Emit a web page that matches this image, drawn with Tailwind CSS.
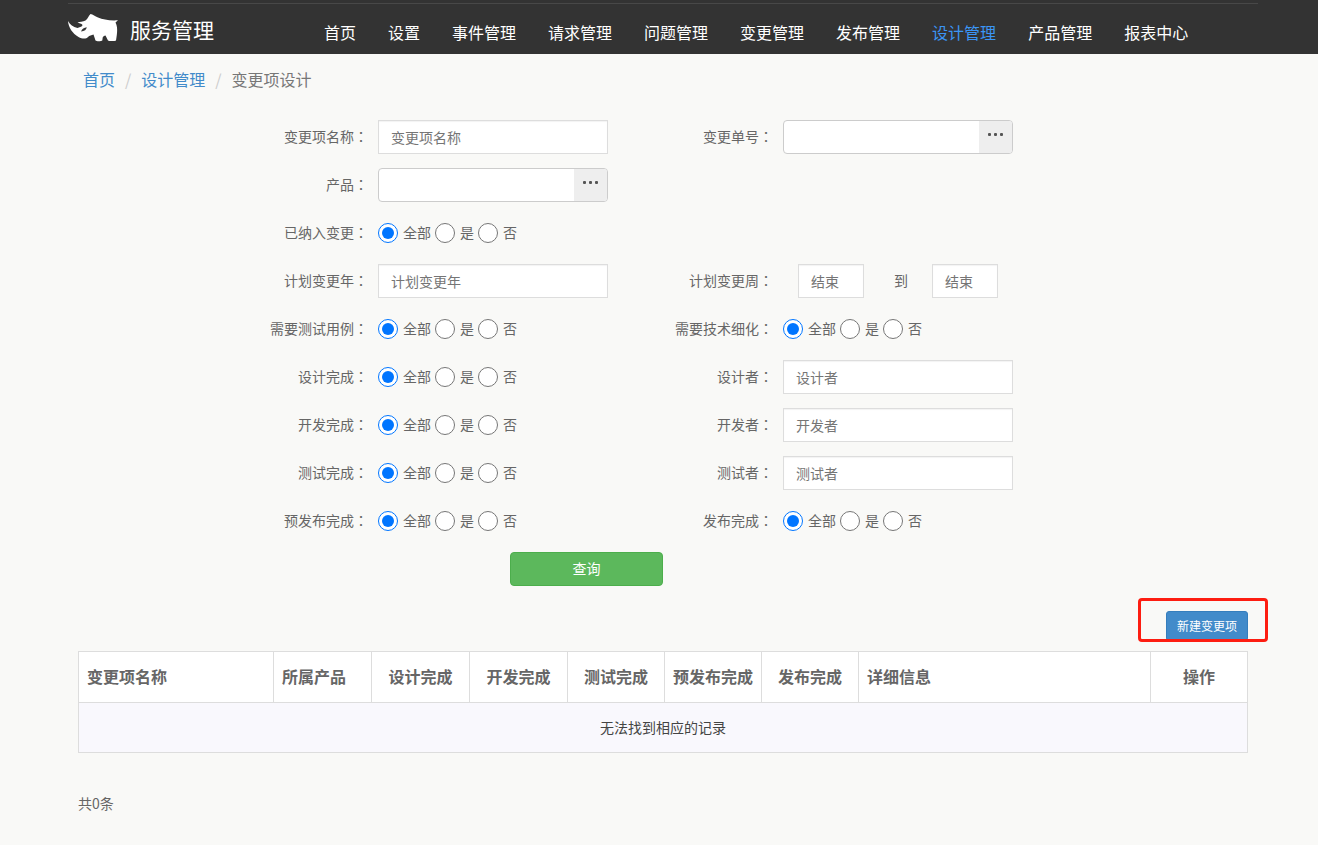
<!DOCTYPE html>
<html lang="zh-CN">
<head>
  <meta charset="UTF-8" />
  <meta name="viewport" content="width=device-width, initial-scale=1.0"/>
  <title>变更项设计 - 服务管理</title>
  <script src="https://cdn.jsdelivr.net/npm/@tailwindcss/browser@4"></script>
</head>
<body class="min-h-screen bg-[#f9f9f7] text-sm text-[#666] font-['Noto_Sans_CJK_SC',sans-serif]">
  <header class="bg-[#333] pl-2 pt-[3px]">
    <div class="max-w-[1190px] h-[51px] mx-auto border-t border-[#484848] flex items-center">
      <a href="#" class="flex items-center gap-3 w-60 shrink-0 text-white">
        <svg class="w-[50px] h-7 mb-[2px]" viewBox="0 0 50 28" aria-hidden="true">
          <path fill="#fff" d="M0 7C2 10.500 5 13 9.500 14L13.500 12.500C15 11.500 14.500 10.500 13.500 10L9.500 8.500C11.500 7.800 15 8 17.500 6.500C20 4.500 20.500 2 22.500 0C25 0 27 2.500 30 3.500C35 5.500 41 6.800 50 6.300L47.500 8.500C49.800 13 49.500 18 48 26.500C47 27.300 41 27.300 40 26.500L37.500 21.500C36 22 35.200 22 34.700 23.500L34.300 26.500C33.500 27.300 28.500 27.500 27.500 26.500L25.500 20.500C23.500 21 21.500 21.500 20 23C18 25.300 14 24.800 10.500 23C4.500 19.500 .5 13.500 0 7Z"/>
          <path fill="#333" d="M13 17.500C14 15 16 13.800 18.800 13.300C18.500 15.500 16.500 17.500 13 17.500Z"/>
        </svg>
        <span class="text-[21px] leading-7">服务管理</span>
      </a>
      <nav class="flex pt-1.5 text-base text-white whitespace-nowrap">
        <a href="#" class="px-4">首页</a>
        <a href="#" class="px-4">设置</a>
        <a href="#" class="px-4">事件管理</a>
        <a href="#" class="px-4">请求管理</a>
        <a href="#" class="px-4">问题管理</a>
        <a href="#" class="px-4">变更管理</a>
        <a href="#" class="px-4">发布管理</a>
        <a href="#" class="px-4 text-[#3b95f5]">设计管理</a>
        <a href="#" class="px-4">产品管理</a>
        <a href="#" class="px-4">报表中心</a>
      </nav>
    </div>
  </header>

  <main class="pl-2">
    <div class="max-w-[1170px] mx-auto">
      <nav class="flex gap-[10px] pt-[13px] pl-[5px] text-base text-[#777]">
        <a href="#" class="text-[#428bca]">首页</a>
        <span class="text-[#ccc]">/</span>
        <a href="#" class="text-[#428bca]">设计管理</a>
        <span class="text-[#ccc]">/</span>
        <span>变更项设计</span>
      </nav>

      <form>
        <div class="grid grid-cols-[58fr_46fr_31fr_46fr_45fr] auto-rows-[34px] items-center gap-x-[10px] gap-y-[14px] mt-[29px]">
          <label for="name" class="col-start-1 text-right pb-[2px]">变更项名称<span class="font-['Noto_Sans_CJK_JP']" lang="ja">：</span></label>
          <input id="name" type="text" placeholder="变更项名称" class="w-full h-[34px] px-3 bg-white border border-[#ddd] inset-shadow-xs placeholder:text-[#757575]"/>
          <label for="order" class="text-right pb-[2px]">变更单号<span class="font-['Noto_Sans_CJK_JP']" lang="ja">：</span></label>
          <div class="flex h-[34px] bg-white border border-[#ccc] rounded overflow-hidden">
            <input id="order" type="text" class="flex-1 min-w-0 px-3"/>
            <button type="button" aria-label="选择变更单" class="w-[33px] bg-[#eee] flex justify-center pt-3">
              <svg class="w-4 h-[3px]" viewBox="0 0 16 3" fill="#555"><rect width="3" height="3" rx="1"/><rect x="6" width="3" height="3" rx="1"/><rect x="12" width="3" height="3" rx="1"/></svg>
            </button>
          </div>

          <label for="product" class="col-start-1 text-right pb-[2px]">产品<span class="font-['Noto_Sans_CJK_JP']" lang="ja">：</span></label>
          <div class="flex h-[34px] bg-white border border-[#ccc] rounded overflow-hidden">
            <input id="product" type="text" class="flex-1 min-w-0 px-3"/>
            <button type="button" aria-label="选择产品" class="w-[33px] bg-[#eee] flex justify-center pt-3">
              <svg class="w-4 h-[3px]" viewBox="0 0 16 3" fill="#555"><rect width="3" height="3" rx="1"/><rect x="6" width="3" height="3" rx="1"/><rect x="12" width="3" height="3" rx="1"/></svg>
            </button>
          </div>

          <span class="col-start-1 text-right pb-[2px]">已纳入变更<span class="font-['Noto_Sans_CJK_JP']" lang="ja">：</span></span>
          <div class="flex gap-1" role="radiogroup" aria-label="已纳入变更">
            <label class="flex gap-[5px] leading-[18px]"><input type="radio" name="included" class="size-5" checked/>全部</label>
            <label class="flex gap-[5px] leading-[18px]"><input type="radio" name="included" class="size-5"/>是</label>
            <label class="flex gap-[5px] leading-[18px]"><input type="radio" name="included" class="size-5"/>否</label>
          </div>

          <label for="year" class="col-start-1 text-right pb-[2px]">计划变更年<span class="font-['Noto_Sans_CJK_JP']" lang="ja">：</span></label>
          <input id="year" type="text" placeholder="计划变更年" class="w-full h-[34px] px-3 bg-white border border-[#ddd] inset-shadow-xs placeholder:text-[#757575]"/>
          <label for="weekStart" class="text-right pb-[2px]">计划变更周<span class="font-['Noto_Sans_CJK_JP']" lang="ja">：</span></label>
          <div class="flex items-center px-[15px]">
            <input id="weekStart" type="text" placeholder="结束" class="w-[66px] h-[34px] px-3 bg-white border border-[#ddd] inset-shadow-xs placeholder:text-[#757575]"/>
            <label for="weekEnd" class="flex-1 pl-[30px] pb-[2px]">到</label>
            <input id="weekEnd" type="text" placeholder="结束" class="w-[66px] h-[34px] px-3 bg-white border border-[#ddd] inset-shadow-xs placeholder:text-[#757575]"/>
          </div>

          <span class="col-start-1 text-right pb-[2px]">需要测试用例<span class="font-['Noto_Sans_CJK_JP']" lang="ja">：</span></span>
          <div class="flex gap-1" role="radiogroup" aria-label="需要测试用例">
            <label class="flex gap-[5px] leading-[18px]"><input type="radio" name="testCase" class="size-5" checked/>全部</label>
            <label class="flex gap-[5px] leading-[18px]"><input type="radio" name="testCase" class="size-5"/>是</label>
            <label class="flex gap-[5px] leading-[18px]"><input type="radio" name="testCase" class="size-5"/>否</label>
          </div>
          <span class="text-right pb-[2px]">需要技术细化<span class="font-['Noto_Sans_CJK_JP']" lang="ja">：</span></span>
          <div class="flex gap-1" role="radiogroup" aria-label="需要技术细化">
            <label class="flex gap-[5px] leading-[18px]"><input type="radio" name="refine" class="size-5" checked/>全部</label>
            <label class="flex gap-[5px] leading-[18px]"><input type="radio" name="refine" class="size-5"/>是</label>
            <label class="flex gap-[5px] leading-[18px]"><input type="radio" name="refine" class="size-5"/>否</label>
          </div>

          <span class="col-start-1 text-right pb-[2px]">设计完成<span class="font-['Noto_Sans_CJK_JP']" lang="ja">：</span></span>
          <div class="flex gap-1" role="radiogroup" aria-label="设计完成">
            <label class="flex gap-[5px] leading-[18px]"><input type="radio" name="designed" class="size-5" checked/>全部</label>
            <label class="flex gap-[5px] leading-[18px]"><input type="radio" name="designed" class="size-5"/>是</label>
            <label class="flex gap-[5px] leading-[18px]"><input type="radio" name="designed" class="size-5"/>否</label>
          </div>
          <label for="designer" class="text-right pb-[2px]">设计者<span class="font-['Noto_Sans_CJK_JP']" lang="ja">：</span></label>
          <input id="designer" type="text" placeholder="设计者" class="w-full h-[34px] px-3 bg-white border border-[#ddd] inset-shadow-xs placeholder:text-[#757575]"/>

          <span class="col-start-1 text-right pb-[2px]">开发完成<span class="font-['Noto_Sans_CJK_JP']" lang="ja">：</span></span>
          <div class="flex gap-1" role="radiogroup" aria-label="开发完成">
            <label class="flex gap-[5px] leading-[18px]"><input type="radio" name="developed" class="size-5" checked/>全部</label>
            <label class="flex gap-[5px] leading-[18px]"><input type="radio" name="developed" class="size-5"/>是</label>
            <label class="flex gap-[5px] leading-[18px]"><input type="radio" name="developed" class="size-5"/>否</label>
          </div>
          <label for="developer" class="text-right pb-[2px]">开发者<span class="font-['Noto_Sans_CJK_JP']" lang="ja">：</span></label>
          <input id="developer" type="text" placeholder="开发者" class="w-full h-[34px] px-3 bg-white border border-[#ddd] inset-shadow-xs placeholder:text-[#757575]"/>

          <span class="col-start-1 text-right pb-[2px]">测试完成<span class="font-['Noto_Sans_CJK_JP']" lang="ja">：</span></span>
          <div class="flex gap-1" role="radiogroup" aria-label="测试完成">
            <label class="flex gap-[5px] leading-[18px]"><input type="radio" name="tested" class="size-5" checked/>全部</label>
            <label class="flex gap-[5px] leading-[18px]"><input type="radio" name="tested" class="size-5"/>是</label>
            <label class="flex gap-[5px] leading-[18px]"><input type="radio" name="tested" class="size-5"/>否</label>
          </div>
          <label for="tester" class="text-right pb-[2px]">测试者<span class="font-['Noto_Sans_CJK_JP']" lang="ja">：</span></label>
          <input id="tester" type="text" placeholder="测试者" class="w-full h-[34px] px-3 bg-white border border-[#ddd] inset-shadow-xs placeholder:text-[#757575]"/>

          <span class="col-start-1 text-right pb-[2px]">预发布完成<span class="font-['Noto_Sans_CJK_JP']" lang="ja">：</span></span>
          <div class="flex gap-1" role="radiogroup" aria-label="预发布完成">
            <label class="flex gap-[5px] leading-[18px]"><input type="radio" name="prereleased" class="size-5" checked/>全部</label>
            <label class="flex gap-[5px] leading-[18px]"><input type="radio" name="prereleased" class="size-5"/>是</label>
            <label class="flex gap-[5px] leading-[18px]"><input type="radio" name="prereleased" class="size-5"/>否</label>
          </div>
          <span class="text-right pb-[2px]">发布完成<span class="font-['Noto_Sans_CJK_JP']" lang="ja">：</span></span>
          <div class="flex gap-1" role="radiogroup" aria-label="发布完成">
            <label class="flex gap-[5px] leading-[18px]"><input type="radio" name="released" class="size-5" checked/>全部</label>
            <label class="flex gap-[5px] leading-[18px]"><input type="radio" name="released" class="size-5"/>是</label>
            <label class="flex gap-[5px] leading-[18px]"><input type="radio" name="released" class="size-5"/>否</label>
          </div>
        </div>

        <button type="submit" class="block ml-108 mt-[14px] pb-[2px] w-[153px] h-[34px] rounded border border-[#4cae4c] bg-[#5cb85c] text-white">查询</button>
      </form>

      <div class="flex justify-end mt-[25px]">
        <div class="relative">
          <button type="button" class="block h-[30px] px-[10px] rounded-[3px] border border-[#357ebd] bg-[#428bca] text-xs text-white">新建变更项</button>
          <!-- highlight frame around the button -->
          <div class="absolute -top-[13px] -left-7 -right-5 h-11 border-3 border-[#fd1d11] rounded pointer-events-none"></div>
        </div>
      </div>

      <table class="w-full table-fixed border-collapse mt-[10px]">
        <colgroup>
          <col class="w-[195px]"/>
          <col class="w-[98px]"/>
          <col class="w-[98px]"/>
          <col class="w-[98px]"/>
          <col class="w-[97px]"/>
          <col class="w-[97px]"/>
          <col class="w-[97px]"/>
          <col/>
          <col class="w-[97px]"/>
        </colgroup>
        <thead class="bg-white text-base">
          <tr class="h-[51px]">
            <th class="border border-[#ddd] px-2 pb-[2px] text-left">变更项名称</th>
            <th class="border border-[#ddd] px-2 pb-[2px] text-left">所属产品</th>
            <th class="border border-[#ddd] pb-[2px]">设计完成</th>
            <th class="border border-[#ddd] pb-[2px]">开发完成</th>
            <th class="border border-[#ddd] pb-[2px]">测试完成</th>
            <th class="border border-[#ddd] pb-[2px]">预发布完成</th>
            <th class="border border-[#ddd] pb-[2px]">发布完成</th>
            <th class="border border-[#ddd] px-2 pb-[2px] text-left">详细信息</th>
            <th class="border border-[#ddd] pb-[2px]">操作</th>
          </tr>
        </thead>
        <tbody>
          <tr class="h-[50px] bg-[#f9f8fd]">
            <td colspan="9" class="border border-[#ddd] pb-[2px] text-center text-[#444]">无法找到相应的记录</td>
          </tr>
        </tbody>
      </table>

      <p class="mt-10">共0条</p>
    </div>
  </main>
</body>
</html>
